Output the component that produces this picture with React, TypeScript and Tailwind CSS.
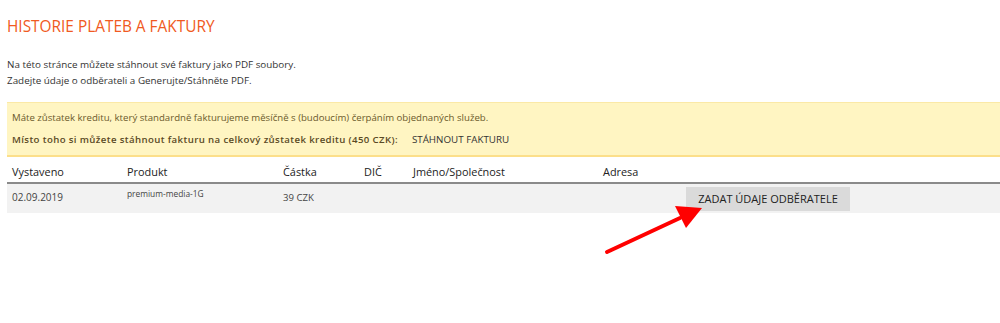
import React from "react";

export default function App() {
  return (
    <div className="w-[1000px] h-[323px] bg-white overflow-hidden text-[#333]" style={{ fontFamily: '"Open Sans", sans-serif' }}>
      <div className="pl-[7px] pt-[16px]">
        <h1 className="text-[15.4px] leading-[22px] text-[#f05a22] font-normal">HISTORIE PLATEB A FAKTURY</h1>
        <div className="mt-[18px] text-[9.85px] leading-[16px] text-[#333]">
          <p>Na této stránce můžete stáhnout své faktury jako PDF soubory.</p>
          <p>Zadejte údaje o odběrateli a Generujte/Stáhněte PDF.</p>
        </div>
        <div className="mt-[14px] bg-[#fff5c2] border-t border-t-[#fbe9a6] border-b-2 border-b-[#fcdf8a] pl-[5px] pt-[8px] pb-[8px] text-[#6b5a2b]">
          <p className="text-[9.65px] leading-[14px]">Máte zůstatek kreditu, který standardně fakturujeme měsíčně s (budoucím) čerpáním objednaných služeb.</p>
          <p className="mt-[8px] text-[9.65px] leading-[14px] flex items-center">
            <span className="font-semibold text-[#5a4a25] tracking-[0.38px]">Místo toho si můžete stáhnout fakturu na celkový zůstatek kreditu (450 CZK):</span>
            <span className="ml-[14px] text-[9.8px] text-[#333]">STÁHNOUT FAKTURU</span>
          </p>
        </div>
        <table className="mt-[8px] w-full border-collapse table-fixed">
          <colgroup>
            <col className="w-[115px]" />
            <col className="w-[156px]" />
            <col className="w-[81px]" />
            <col className="w-[49px]" />
            <col className="w-[190px]" />
            <col />
          </colgroup>
          <thead>
            <tr className="border-b-2 border-b-[#8a8a8a] text-[10.9px] leading-[14px] text-[#222] text-left">
              <th className="font-medium pl-[5px] h-[18px] pb-[3px]">Vystaveno</th>
              <th className="font-medium pl-[5px] pb-[3px]">Produkt</th>
              <th className="font-medium pl-[5px] pb-[3px]">Částka</th>
              <th className="font-medium pl-[5px] pb-[3px]">DIČ</th>
              <th className="font-medium pl-[5px] pb-[3px]">Jméno/Společnost</th>
              <th className="font-medium pl-[5px] pb-[3px]">Adresa</th>
            </tr>
          </thead>
          <tbody>
            <tr className="bg-[#f2f2f2] text-[10px] text-[#444] align-top h-[30px]">
              <td className="pl-[5px] pt-[6px]">02.09.2019</td>
              <td className="pl-[5px] pt-[4px] text-[8.4px]">premium-media-1G</td>
              <td className="pl-[5px] pt-[7px] text-[9.6px]">39 CZK</td>
              <td></td>
              <td></td>
              <td className="pt-[3px]">
                <button className="ml-[88px] h-[24px] w-[164px] bg-[#dadada] text-[11px] text-[#222]" style={{ fontFamily: '"Open Sans", sans-serif' }}>ZADAT ÚDAJE ODBĚRATELE</button>
              </td>
            </tr>
          </tbody>
        </table>
      </div>
      <svg className="absolute left-0 top-0 pointer-events-none" width="1000" height="323" viewBox="0 0 1000 323">
        <line x1="607" y1="252" x2="680" y2="218" stroke="#ff0000" strokeWidth="4" strokeLinecap="round" />
        <polygon points="702,208 675,206 686,228" fill="#ff0000" />
      </svg>
    </div>
  );
}
